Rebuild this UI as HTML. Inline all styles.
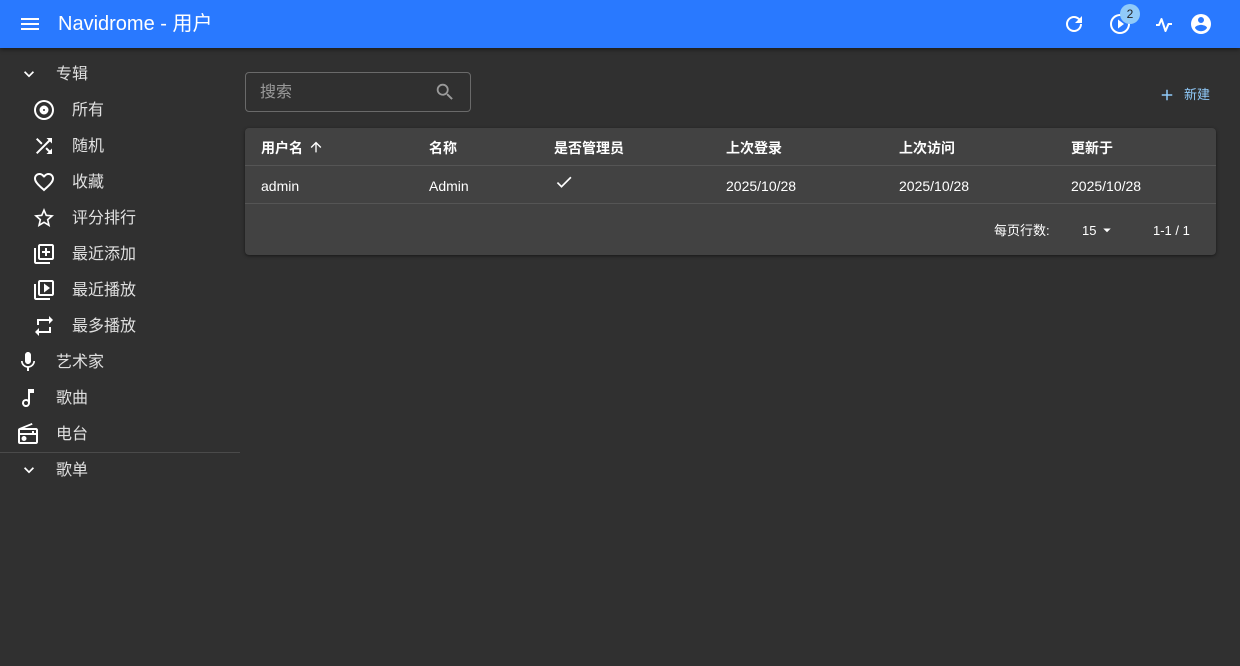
<!DOCTYPE html>
<html><head><meta charset="utf-8"><style>
*{box-sizing:border-box;margin:0;padding:0}
body{width:1240px;height:666px;background:#303030;font-family:"Liberation Sans","Noto Sans CJK SC",sans-serif;color:#fff;overflow:hidden;position:relative}
.bar{position:absolute;left:0;top:0;width:1240px;height:48px;background:#2979ff;box-shadow:0 2px 4px rgba(0,0,0,.4)}
.bar .t{position:absolute;left:58px;top:12px;font-size:20px;line-height:24px}
svg{position:absolute;fill:#fff}
.nav{position:absolute;font-size:16px;color:rgba(255,255,255,.85);line-height:20px;margin-top:2px}
.sep{position:absolute;left:0;top:452px;width:240px;height:1px;background:#4a4a4a}
.search{position:absolute;left:245px;top:72px;width:226px;height:40px;border:1px solid #6a6a6a;border-radius:4px}
.search span{position:absolute;left:14px;top:10px;font-size:16px;line-height:20px;color:#9a9a9a}
.paper{position:absolute;left:245px;top:128px;width:971px;height:127px;background:#424242;border-radius:4px;box-shadow:0 1px 3px rgba(0,0,0,.5)}
.row{position:absolute;left:0;width:971px;height:1px;background:#555}
.c{position:absolute;font-size:14px;line-height:16px;margin-top:1px}
.h{font-weight:bold}
</style></head><body>
<div class="bar">
<svg style="left:18px;top:12px" width="24" height="24" viewBox="0 0 24 24"><path d="M3 18h18v-2H3v2zm0-5h18v-2H3v2zm0-7v2h18V6H3z"/></svg>
<div class="t">Navidrome - 用户</div>
<svg style="left:1062px;top:12px" width="24" height="24" viewBox="0 0 24 24"><path d="M17.65 6.35A7.96 7.96 0 0012 4a8 8 0 108 8h-2a6 6 0 11-1.76-4.24L13 11h7V4l-2.35 2.35z"/></svg>
<svg style="left:1108px;top:12px" width="24" height="24" viewBox="0 0 24 24"><path d="M10 16.5l6-4.5-6-4.5v9zM12 2a10 10 0 100 20 10 10 0 000-20zm0 18a8 8 0 110-16 8 8 0 010 16z"/></svg>
<div style="position:absolute;left:1120px;top:4px;width:20px;height:20px;border-radius:10px;background:#90caf9;color:#222;font-size:12px;text-align:center;line-height:20px">2</div>
<svg style="left:1152px;top:12px" width="24" height="24" viewBox="0 0 24 24"><path d="M4 13h3l2.5-6 4 12 3-7H20" fill="none" stroke="#fff" stroke-width="2" stroke-linejoin="round"/></svg>
<svg style="left:1189px;top:12px" width="24" height="24" viewBox="0 0 24 24"><path d="M12 2a10 10 0 100 20 10 10 0 000-20zm0 3a3 3 0 110 6 3 3 0 010-6zm0 14.2a7.2 7.2 0 01-6-3.22c.03-1.99 4-3.08 6-3.08s5.97 1.09 6 3.08a7.2 7.2 0 01-6 3.22z"/></svg>
</div>

<svg style="left:19px;top:64px" width="20" height="20" viewBox="0 0 24 24"><path d="M7.4 8.6L12 13.2l4.6-4.6L18 10l-6 6-6-6z"/></svg>
<div class="nav" style="left:56px;top:63px">专辑</div>
<svg style="left:32px;top:98px" width="24" height="24" viewBox="0 0 24 24"><path d="M12 2a10 10 0 100 20 10 10 0 000-20zm0 18a8 8 0 110-16 8 8 0 010 16zm0-12.5a4.5 4.5 0 100 9 4.5 4.5 0 000-9zm0 5.5a1 1 0 110-2 1 1 0 010 2z"/></svg>
<div class="nav" style="left:72px;top:99px">所有</div>
<svg style="left:32px;top:134px" width="24" height="24" viewBox="0 0 24 24"><path d="M10.59 9.17L5.41 4 4 5.41l5.17 5.17 1.42-1.41zM14.5 4l2.04 2.04L4 18.59 5.41 20 17.96 7.46 20 9.5V4h-5.5zm.33 9.41l-1.41 1.41 3.13 3.13L14.5 20H20v-5.5l-2.04 2.04-3.13-3.13z"/></svg>
<div class="nav" style="left:72px;top:135px">随机</div>
<svg style="left:32px;top:170px" width="24" height="24" viewBox="0 0 24 24"><path d="M16.5 3c-1.74 0-3.41.81-4.5 2.09C10.91 3.81 9.24 3 7.5 3 4.42 3 2 5.42 2 8.5c0 3.78 3.4 6.86 8.55 11.54L12 21.35l1.45-1.32C18.6 15.36 22 12.28 22 8.5 22 5.42 19.58 3 16.5 3zm-4.4 15.55l-.1.1-.1-.1C7.14 14.24 4 11.39 4 8.5 4 6.5 5.5 5 7.5 5c1.54 0 3.04.99 3.57 2.36h1.87C13.46 5.99 14.96 5 16.5 5c2 0 3.5 1.5 3.5 3.5 0 2.89-3.14 5.74-7.9 10.05z"/></svg>
<div class="nav" style="left:72px;top:171px">收藏</div>
<svg style="left:32px;top:206px" width="24" height="24" viewBox="0 0 24 24"><path d="M22 9.24l-7.19-.62L12 2 9.19 8.63 2 9.24l5.46 4.73L5.82 21 12 17.27 18.18 21l-1.63-7.03L22 9.24zM12 15.4l-3.76 2.27 1-4.28-3.32-2.88 4.38-.38L12 6.1l1.71 4.04 4.38.38-3.32 2.88 1 4.28L12 15.4z"/></svg>
<div class="nav" style="left:72px;top:207px">评分排行</div>
<svg style="left:32px;top:242px" width="24" height="24" viewBox="0 0 24 24"><path d="M4 6H2v14c0 1.1.9 2 2 2h14v-2H4V6zm16-4H8c-1.1 0-2 .9-2 2v12c0 1.1.9 2 2 2h12c1.1 0 2-.9 2-2V4c0-1.1-.9-2-2-2zm0 14H8V4h12v12zm-7-2h2v-3h3V9h-3V6h-2v3h-3v2h3z"/></svg>
<div class="nav" style="left:72px;top:243px">最近添加</div>
<svg style="left:32px;top:278px" width="24" height="24" viewBox="0 0 24 24"><path d="M4 6H2v14c0 1.1.9 2 2 2h14v-2H4V6zm16-4H8c-1.1 0-2 .9-2 2v12c0 1.1.9 2 2 2h12c1.1 0 2-.9 2-2V4c0-1.1-.9-2-2-2zm0 14H8V4h12v12zM12 5.5v9l6-4.5z"/></svg>
<div class="nav" style="left:72px;top:279px">最近播放</div>
<svg style="left:32px;top:314px" width="24" height="24" viewBox="0 0 24 24"><path d="M7 7h10v3l4-4-4-4v3H5v6h2V7zm10 10H7v-3l-4 4 4 4v-3h12v-6h-2v4z"/></svg>
<div class="nav" style="left:72px;top:315px">最多播放</div>
<svg style="left:16px;top:350px" width="24" height="24" viewBox="0 0 24 24"><path d="M12 14c1.66 0 3-1.34 3-3V5c0-1.66-1.34-3-3-3S9 3.34 9 5v6c0 1.66 1.34 3 3 3zm5.3-3c0 3-2.54 5.1-5.3 5.1S6.7 14 6.7 11H5c0 3.41 2.72 6.230 6 6.72V21h2v-3.28c3.28-.48 6-3.3 6-6.72h-1.7z"/></svg>
<div class="nav" style="left:56px;top:351px">艺术家</div>
<svg style="left:16px;top:386px" width="24" height="24" viewBox="0 0 24 24"><path d="M12 3v10.55A4 4 0 1014 17V7h4V3h-6zm-2 16a2 2 0 110-4 2 2 0 010 4z"/></svg>
<div class="nav" style="left:56px;top:387px">歌曲</div>
<svg style="left:16px;top:422px" width="24" height="24" viewBox="0 0 24 24"><path d="M20 6H8.3l8.26-3.34L15.88 1 3.24 6.15C2.51 6.43 2 7.17 2 8v12a2 2 0 002 2h16c1.11 0 2-.89 2-2V8c0-1.11-.89-2-2-2zm0 2v3h-2V9h-2v2H4V8h16zM4 20v-7h16v7H4zm4-6a2.5 2.5 0 100 5 2.5 2.5 0 000-5z"/></svg>
<div class="nav" style="left:56px;top:423px">电台</div>
<div class="sep"></div>
<svg style="left:19px;top:460px" width="20" height="20" viewBox="0 0 24 24"><path d="M7.4 8.6L12 13.2l4.6-4.6L18 10l-6 6-6-6z"/></svg>
<div class="nav" style="left:56px;top:459px">歌单</div>

<div class="search"><span>搜索</span>
<svg style="left:188px;top:8px;fill:#9a9a9a" width="22" height="22" viewBox="0 0 24 24"><path d="M15.5 14h-.79l-.28-.27A6.47 6.47 0 0016 9.5 6.5 6.5 0 109.5 16c1.61 0 3.09-.59 4.23-1.57l.27.28v.79l5 4.99L20.49 19l-4.99-5zm-6 0C7.01 14 5 11.99 5 9.5S7.01 5 9.5 5 14 7.01 14 9.5 11.99 14 9.5 14z"/></svg></div>
<svg style="left:1158px;top:86px;fill:#90caf9" width="18" height="18" viewBox="0 0 24 24"><path d="M19 13h-6v6h-2v-6H5v-2h6V5h2v6h6v2z"/></svg>
<div style="position:absolute;left:1184px;top:87px;font-size:13px;line-height:16px;color:#90caf9">新建</div>

<div class="paper">
<div class="c h" style="left:16px;top:11px">用户名</div>
<svg style="left:63px;top:11px" width="16" height="16" viewBox="0 0 24 24"><path d="M4 12l1.41 1.41L11 7.83V20h2V7.83l5.58 5.59L20 12l-8-8-8 8z"/></svg>
<div class="c h" style="left:184px;top:11px">名称</div>
<div class="c h" style="left:309px;top:11px">是否管理员</div>
<div class="c h" style="left:481px;top:11px">上次登录</div>
<div class="c h" style="left:654px;top:11px">上次访问</div>
<div class="c h" style="left:826px;top:11px">更新于</div>
<div class="row" style="top:37px"></div>
<div class="c" style="left:16px;top:49px">admin</div>
<div class="c" style="left:184px;top:49px">Admin</div>
<svg style="left:309px;top:44px" width="20" height="20" viewBox="0 0 24 24"><path d="M9 16.17L4.83 12l-1.42 1.41L9 19 21 7l-1.41-1.41z"/></svg>
<div class="c" style="left:481px;top:49px">2025/10/28</div>
<div class="c" style="left:654px;top:49px">2025/10/28</div>
<div class="c" style="left:826px;top:49px">2025/10/28</div>
<div class="row" style="top:75px"></div>
<div class="c" style="left:749px;top:94px;font-size:13px">每页行数:</div>
<div class="c" style="left:837px;top:94px;font-size:13px">15</div>
<svg style="left:853px;top:93px" width="18" height="18" viewBox="0 0 24 24"><path d="M7 10l5 5 5-5z"/></svg>
<div class="c" style="left:908px;top:94px;font-size:13px">1-1 / 1</div>
</div>
</body></html>
